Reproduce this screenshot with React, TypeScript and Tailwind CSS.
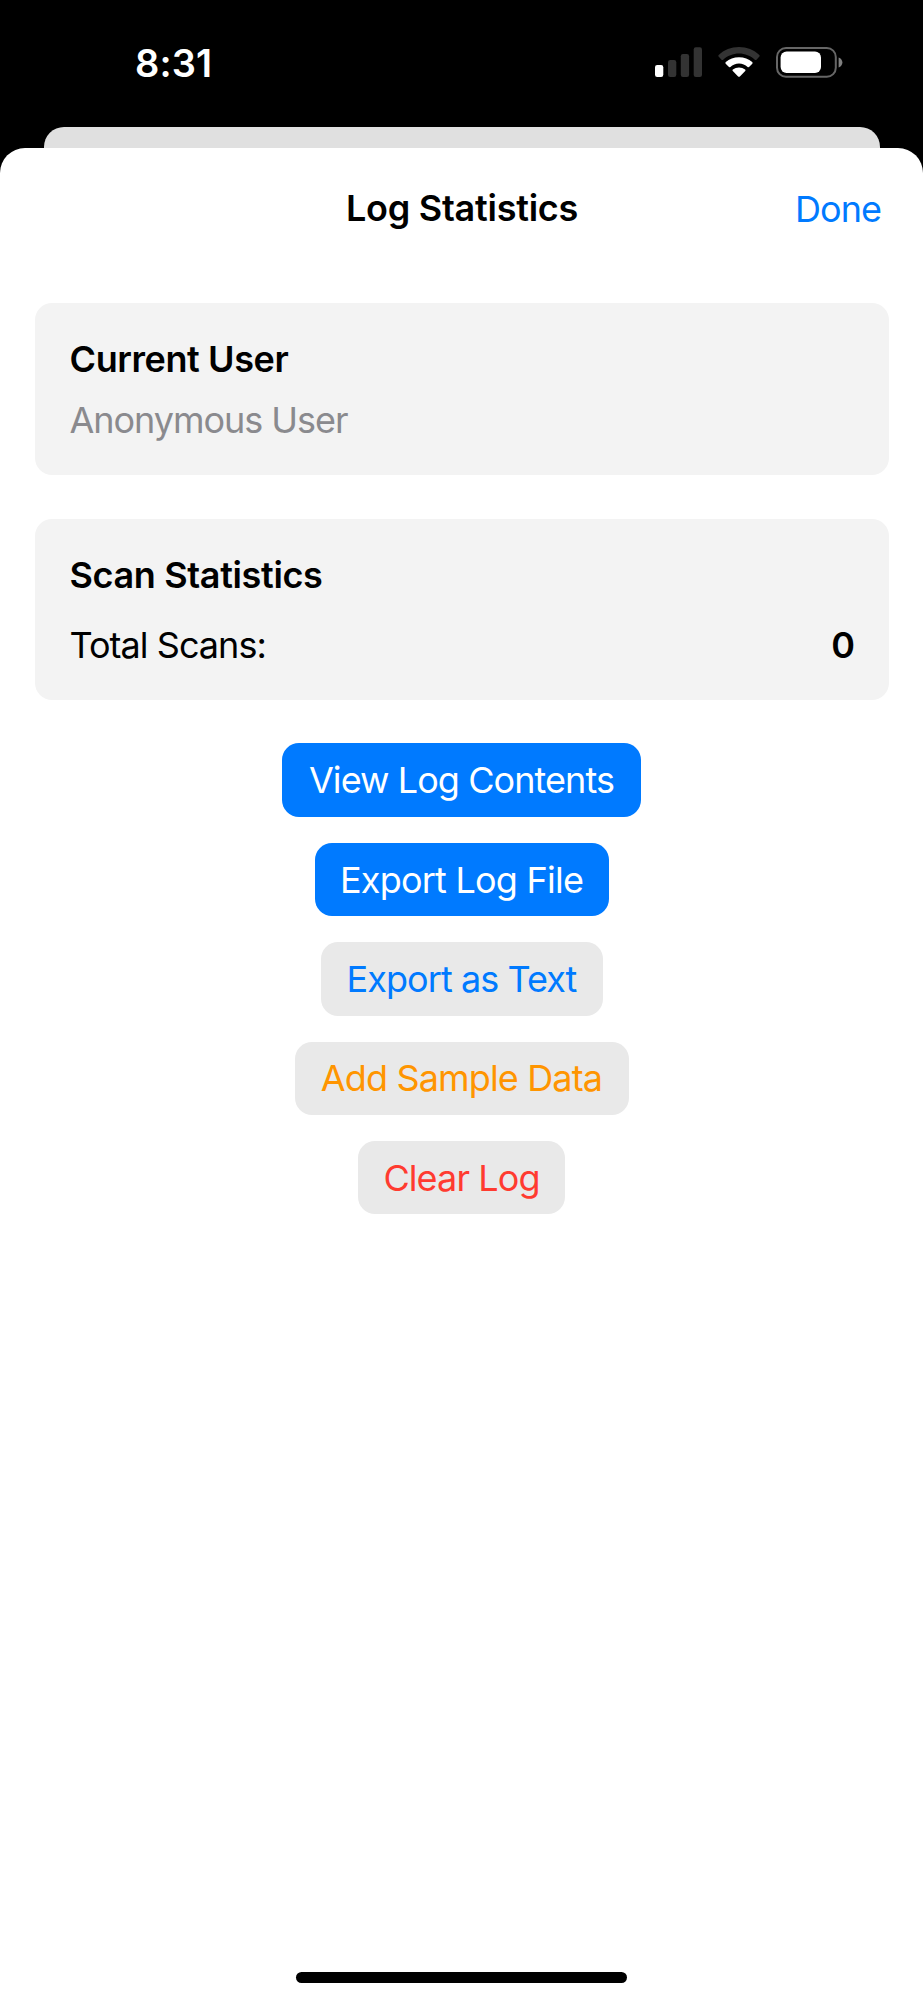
function SignalIcon() {
  return (
    <svg width="48" height="30" viewBox="0 0 48 30">
      <rect x="0" y="18" width="8.3" height="12" rx="2.2" fill="#fff" />
      <rect x="13" y="13" width="8.3" height="17" rx="2.2" fill="#333" />
      <rect x="25.8" y="7" width="8.3" height="23" rx="2.2" fill="#333" />
      <rect x="38.7" y="0.2" width="8.3" height="29.8" rx="2.2" fill="#333" />
    </svg>
  );
}

function WifiIcon() {
  return (
    <svg width="42" height="30" viewBox="0 0 42 30">
      <path
        d="M21 0C13.2 0 6 3 0.7 7.9C0.2 8.4 0.2 9.1 0.6 9.6L3.5 12.7C4 13.2 4.7 13.2 5.2 12.7C9.4 8.9 15 6.6 21 6.6C27 6.6 32.6 8.9 36.8 12.7C37.3 13.2 38 13.2 38.5 12.7L41.4 9.6C41.8 9.1 41.8 8.4 41.3 7.9C36 3 28.8 0 21 0Z"
        fill="#333"
      />
      <path
        d="M21 10.2C15.9 10.2 11.3 12 7.8 15.1C7.3 15.6 7.3 16.3 7.7 16.8L10.7 19.8C11.1 20.3 11.9 20.3 12.4 19.9C14.7 17.9 17.7 16.6 21 16.6C24.3 16.6 27.3 17.9 29.6 19.9C30.1 20.3 30.9 20.3 31.3 19.8L34.3 16.8C34.7 16.3 34.7 15.6 34.2 15.1C30.7 12 26.1 10.2 21 10.2Z"
        fill="#fff"
      />
      <path
        d="M21 20.4C18.7 20.4 16.6 21.2 14.9 22.5C14.4 22.9 14.4 23.6 14.8 24.1L20.1 29.4C20.6 29.9 21.4 29.9 21.9 29.4L27.2 24.1C27.6 23.6 27.6 22.9 27.1 22.5C25.4 21.2 23.3 20.4 21 20.4Z"
        fill="#fff"
      />
    </svg>
  );
}

function BatteryIcon() {
  return (
    <svg width="67" height="31" viewBox="0 0 67 31">
      <rect x="1" y="1" width="58.8" height="28.8" rx="9" fill="none" stroke="#666" strokeWidth="2" />
      <rect x="4.6" y="4.6" width="40.4" height="21.4" rx="6" fill="#fff" />
      <path d="M62.6 10.4C65 11 66.4 13.2 66.4 15.4C66.4 17.6 65 19.8 62.6 20.4Z" fill="#808080" />
    </svg>
  );
}

const actions = [
  { label: "View Log Contents", style: "w-[359px] bg-[#007aff] text-white tracking-[-0.93px]" },
  { label: "Export Log File", style: "w-[294px] bg-[#007aff] text-white tracking-[-0.77px]" },
  { label: "Export as Text", style: "w-[282px] bg-[#e9e9e9] text-[#007aff] tracking-[-0.94px]" },
  { label: "Add Sample Data", style: "w-[334px] bg-[#e9e9e9] text-[#ff9500] tracking-[-0.85px]" },
  { label: "Clear Log", style: "w-[207px] bg-[#e9e9e9] text-[#ff3b30] tracking-[-0.9px]" },
];

export default function App() {
  return (
    <div className="flex h-[2000px] w-[923px] flex-col bg-black font-['Inter',sans-serif] text-[36px] leading-[44px] text-black">
      <div className="flex h-[127px] shrink-0 items-start justify-between pr-[80px] pl-[135px]">
        <span className="pt-[40px] text-[38px] leading-[46px] font-semibold tracking-[0.1px] text-white">8:31</span>
        <div className="flex items-start pt-[47px]">
          <SignalIcon />
          <div className="ml-[15px]">
            <WifiIcon />
          </div>
          <div className="ml-[16px]">
            <BatteryIcon />
          </div>
        </div>
      </div>

      <div className="mx-[43.5px] h-[21px] shrink-0 rounded-t-[20px] bg-[#e0e0e0]" />

      <main className="flex flex-1 flex-col rounded-t-[25px] bg-white">
        <header className="grid grid-cols-[1fr_auto_1fr] items-start pt-[38px] pr-[42px] pl-[43px]">
          <h1 className="col-start-2 font-semibold tracking-[-0.25px]">Log Statistics</h1>
          <button className="mt-px justify-self-end tracking-[-0.95px] text-[#007aff]">Done</button>
        </header>

        <section className="mx-[34.5px] mt-[72px] flex h-[172.3px] flex-col gap-[17px] rounded-[17px] bg-[#f3f3f3] px-[35px] pt-[34px]">
          <h2 className="font-semibold tracking-[-0.4px]">Current User</h2>
          <p className="tracking-[-1.04px] text-[#8a8a8e]">Anonymous User</p>
        </section>

        <section className="mx-[34.5px] mt-[43.5px] flex h-[181.2px] flex-col gap-[26px] rounded-[17px] bg-[#f3f3f3] pt-[34px] pr-[33.5px] pl-[35px]">
          <h2 className="font-semibold tracking-[-0.35px]">Scan Statistics</h2>
          <div className="flex justify-between">
            <span className="tracking-[-0.96px]">Total Scans:</span>
            <span className="font-semibold">0</span>
          </div>
        </section>

        <div className="mt-[43.4px] flex flex-col items-center gap-[25.9px]">
          {actions.map((action) => (
            <button
              key={action.label}
              className={`flex h-[73.5px] items-center justify-center rounded-[17px] whitespace-nowrap ${action.style}`}
            >
              {action.label}
            </button>
          ))}
        </div>

        <div className="mx-auto mt-auto mb-[17.5px] h-[10.5px] w-[331px] rounded-full bg-black" />
      </main>
    </div>
  );
}
